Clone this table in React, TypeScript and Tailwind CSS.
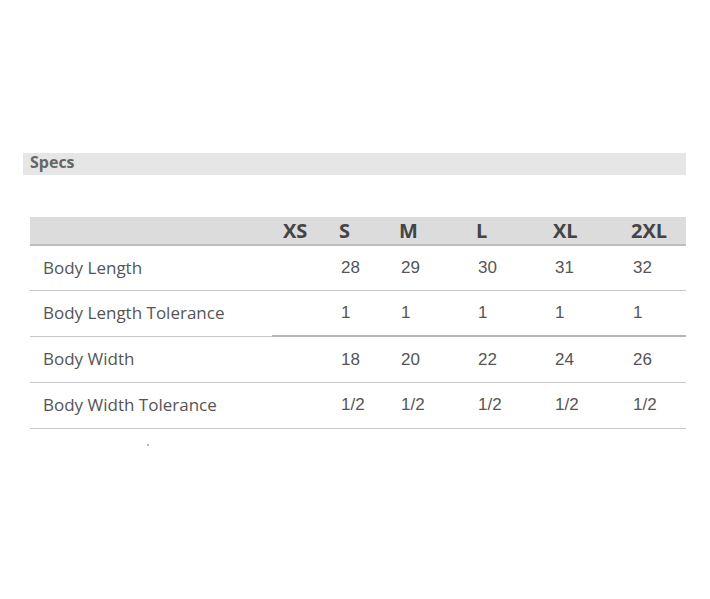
const sizes = ["XS", "S", "M", "L", "XL", "2XL"];

const rows = [
  { label: "Body Length", values: ["", "28", "29", "30", "31", "32"] },
  { label: "Body Length Tolerance", values: ["", "1", "1", "1", "1", "1"] },
  { label: "Body Width", values: ["", "18", "20", "22", "24", "26"] },
  { label: "Body Width Tolerance", values: ["", "1/2", "1/2", "1/2", "1/2", "1/2"] },
];

const colWidths = ["w-[56px]", "w-[60px]", "w-[77px]", "w-[77px]", "w-[78px]", "w-[66px]"];

export default function App() {
  return (
    <div className="min-h-screen w-[710px] bg-white pt-[153px] font-['Open_Sans',sans-serif]">
      <div className="ml-[23px] w-[663px] h-[22px] bg-[#e6e6e6] pl-[7px] text-[16px] font-bold leading-[18px] text-[#666]">
        Specs
      </div>

      <table className="ml-[30px] mt-[42px] w-[656px] table-fixed border-collapse">
        <colgroup>
          <col className="w-[242px]" />
          {colWidths.map((w, i) => (
            <col key={i} className={w} />
          ))}
        </colgroup>
        <thead>
          <tr className="h-[28px] bg-[#dcdcdc] border-b-2 border-[#bdbdbd]">
            <th />
            {sizes.map((s) => (
              <th
                key={s}
                className="pl-[11px] text-left text-[20px] font-bold leading-[26px] text-[#444]"
              >
                {s}
              </th>
            ))}
          </tr>
        </thead>
        <tbody>
          {rows.map((r, idx) => (
            <tr
              key={r.label}
              className={(idx === 0 ? "h-[45px]" : "h-[46px]") + " border-b border-[#c8c8c8]"}
            >
              <td className="pl-[13px] text-[17px] text-[#555]">{r.label}</td>
              {r.values.map((v, i) => (
                <td
                  key={i}
                  className={
                    "pl-[13px] text-[17px] text-[#555] font-['Liberation_Sans',Arial,sans-serif]" +
                    (idx === 1 ? " border-b-2 border-[#b5b5b5]" : "")
                  }
                >
                  {v}
                </td>
              ))}
            </tr>
          ))}
        </tbody>
      </table>
      <div className="ml-[147px] mt-[15px] h-[2px] w-[2px] bg-[#bbb]" />
    </div>
  );
}
